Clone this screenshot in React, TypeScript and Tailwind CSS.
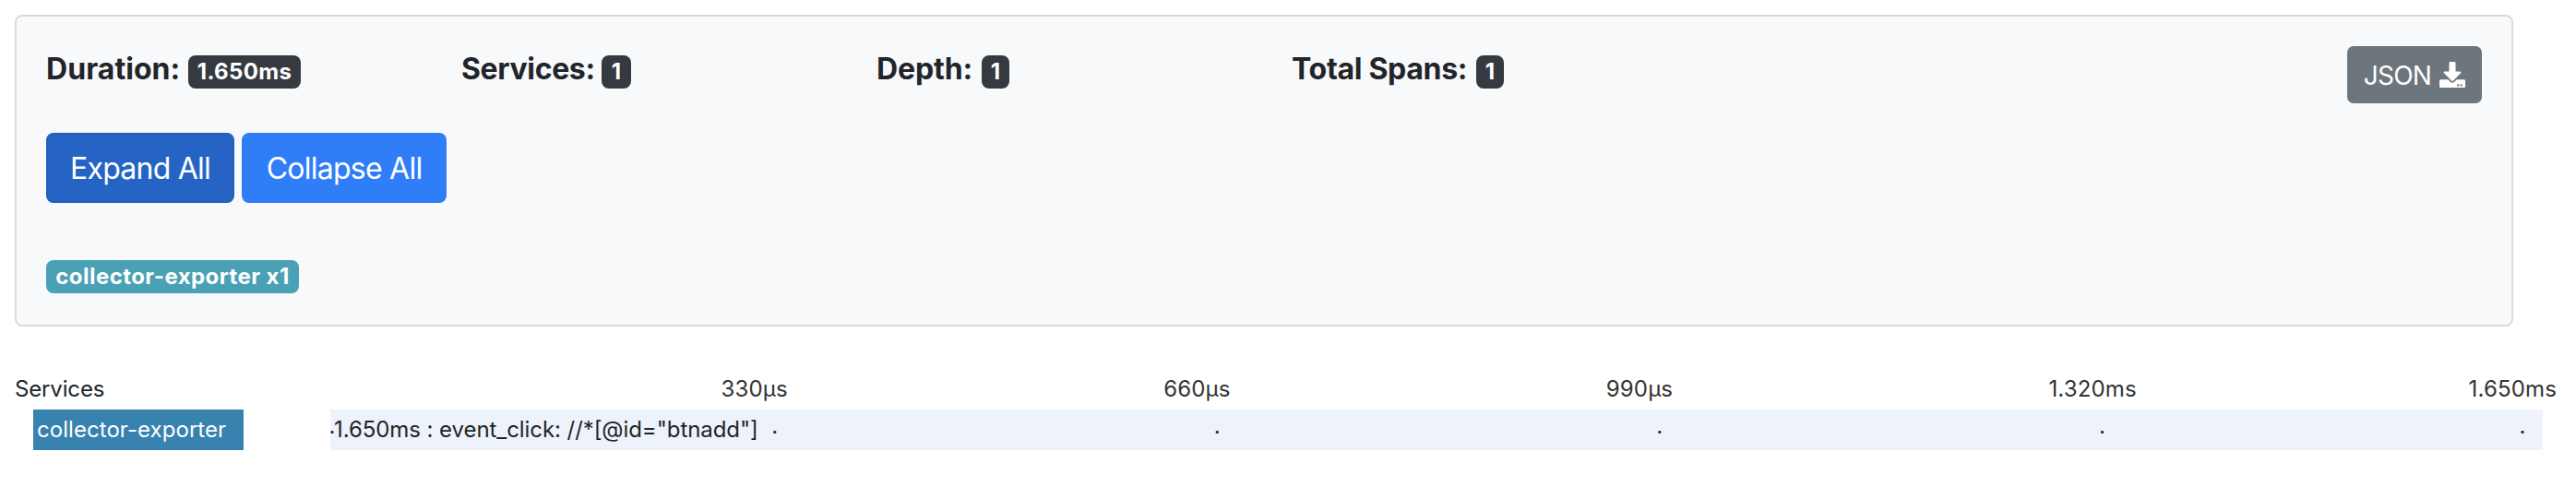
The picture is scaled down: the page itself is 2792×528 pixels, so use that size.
import { FaDownload } from "react-icons/fa";

const stats = [
  { label: "Duration:", value: "1.650ms", labelClass: "w-[154px] tracking-[0.05px]", badgeWidth: "w-[122px]" },
  { label: "Services:", value: "1", labelClass: "w-[152px] tracking-[-0.35px]", badgeWidth: "w-[32px]" },
  { label: "Depth:", value: "1", labelClass: "w-[114px] tracking-[-0.1px]", badgeWidth: "w-[30px]" },
  { label: "Total Spans:", value: "1", labelClass: "w-[200px] tracking-[-0.3px]", badgeWidth: "w-[30px]" },
];

const marks = ["w-[479.6px]", "w-[479.6px]", "w-[479.6px]", "w-[479.6px]", "w-[455.6px]", "w-1"];

function Summary() {
  return (
    <section className="flex h-[338px] w-[2708px] justify-between rounded-lg border-2 border-[#d9dadc] bg-[#f8f9fb] px-8 pt-8">
      <div className="flex flex-col items-start">
        <ul className="flex h-[94px]">
          {stats.map((s) => (
            <li key={s.label} className="flex w-[450px] items-start whitespace-nowrap">
              <strong className={"mt-[5px] text-[32px] leading-[39px] font-bold " + s.labelClass}>{s.label}</strong>
              <span className={"mt-[10px] flex h-9 items-center justify-center rounded-lg bg-[#343a40] leading-6 font-bold tracking-[0.35px] text-white " + s.badgeWidth}>
                {s.value}
              </span>
            </li>
          ))}
        </ul>
        <div className="flex gap-2 text-[32px] tracking-[-0.75px] text-white">
          <button className="flex h-[76px] w-[204px] items-center justify-center rounded-lg border-2 border-[#215fbc] bg-[#2564c4] pt-0.5">Expand All</button>
          <button className="flex h-[76px] w-[222px] items-center justify-center rounded-lg bg-[#2f7ef8] pt-0.5">Collapse All</button>
        </div>
        <span className="mt-[62px] flex h-9 w-[274px] items-center justify-center rounded-lg bg-[#4aa0b5] leading-6 font-bold tracking-[0.45px] text-white">
          collector-exporter x1
        </span>
      </div>
      <button className="flex h-[62px] w-[146px] items-center justify-center gap-[9px] rounded-[7px] bg-[#6d757d] text-[28px] tracking-[-0.75px] text-white">
        <span className="pt-0.5">JSON</span>
        <FaDownload className="size-7" />
      </button>
    </section>
  );
}

function Timeline() {
  return (
    <section>
      <div className="flex h-10 items-start tracking-[0.15px] text-[#333]">
        <span className="w-[765.6px] tracking-[-0.15px] text-[#212529]">Services</span>
        <span className="w-[479.6px]">330µs</span>
        <span className="w-[479.6px]">660µs</span>
        <span className="w-[479.6px]">990µs</span>
        <span className="w-[455.2px]">1.320ms</span>
        <span>1.650ms</span>
      </div>
      <div className="flex h-11">
        <div className="ml-5 flex w-[228px] items-center bg-[#3782af] pl-1 tracking-[0.05px] text-white">collector-exporter</div>
        <div className="relative ml-[94px] flex w-[2398px] items-center bg-[#eef2fa] pl-1">
          <span className="tracking-[-0.07px]">{'1.650ms : event_click: //*[@id="btnadd"]'}</span>
          <div className="absolute inset-0 flex items-center pt-[5px]">
            {marks.map((width, i) => (
              <span key={i} className={width}>
                <span className="flex w-1 justify-center">·</span>
              </span>
            ))}
          </div>
        </div>
      </div>
    </section>
  );
}

export default function App() {
  return (
    <main className="flex h-[528px] w-[2792px] flex-col gap-[50px] overflow-hidden bg-white px-4 pt-4 font-[Inter,'Liberation_Sans',sans-serif] text-[24px] leading-[36px] text-[#212529]">
      <Summary />
      <Timeline />
    </main>
  );
}
